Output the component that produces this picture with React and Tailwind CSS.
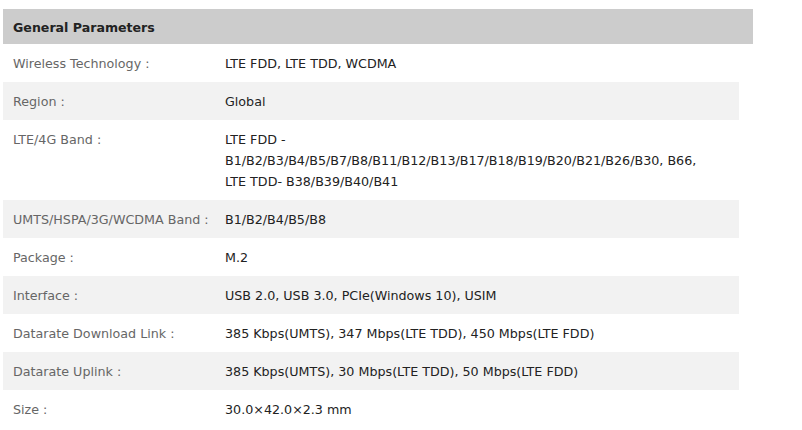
const rows = [
  { label: 'Wireless Technology :', value: ['LTE FDD, LTE TDD, WCDMA'] },
  { label: 'Region :', value: ['Global'] },
  {
    label: 'LTE/4G Band :',
    value: [
      'LTE FDD -',
      'B1/B2/B3/B4/B5/B7/B8/B11/B12/B13/B17/B18/B19/B20/B21/B26/B30, B66,',
      'LTE TDD- B38/B39/B40/B41',
    ],
  },
  { label: 'UMTS/HSPA/3G/WCDMA Band :', value: ['B1/B2/B4/B5/B8'] },
  { label: 'Package :', value: ['M.2'] },
  { label: 'Interface :', value: ['USB 2.0, USB 3.0, PCIe(Windows 10), USIM'] },
  { label: 'Datarate Download Link :', value: ['385 Kbps(UMTS), 347 Mbps(LTE TDD), 450 Mbps(LTE FDD)'] },
  { label: 'Datarate Uplink :', value: ['385 Kbps(UMTS), 30 Mbps(LTE TDD), 50 Mbps(LTE FDD)'] },
  { label: 'Size :', value: ['30.0×42.0×2.3 mm'] },
];

export default function App() {
  return (
    <div className="w-[802px] h-[430px] bg-white overflow-hidden pt-[9px] pl-[3px] font-['DejaVu_Sans',sans-serif] text-[12.7px]">
      <div className="w-[750px] h-[35px] bg-[#cccccc] flex items-center pl-[10px] pt-[3px] font-bold text-[#222] text-[12.6px]">
        General Parameters
      </div>
      <div className="w-[736px]">
        {rows.map((row, i) => (
          <div
            key={row.label}
            className={`grid grid-cols-[222px_1fr] pt-[9px] pb-[8px] leading-[21px] ${i % 2 === 1 ? 'bg-[#f2f2f2]' : 'bg-white'}`}
          >
            <div className="pl-[10px] text-[#666]">{row.label}</div>
            <div className="text-[#222]">
              {row.value.map((line) => (
                <div key={line}>{line}</div>
              ))}
            </div>
          </div>
        ))}
      </div>
    </div>
  );
}
